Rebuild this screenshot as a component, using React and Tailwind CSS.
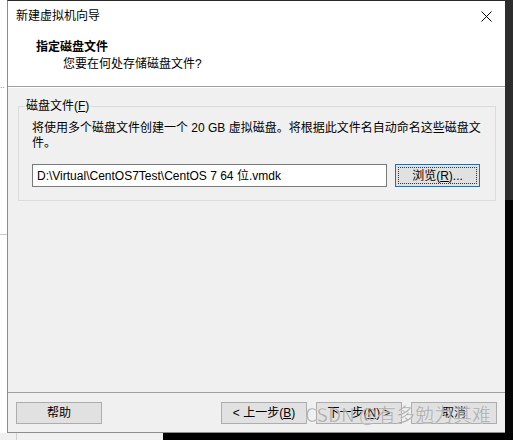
import React from 'react';

const font = { fontFamily: '"Liberation Sans", "Noto Sans CJK SC", sans-serif' };

const Btn = ({ children, className = '' }) => (
  <button
    className={`h-[22px] w-[86px] border border-[#adadad] bg-[#e1e1e1] text-[12px] text-black leading-none flex items-center justify-center ${className}`}
  >
    {children}
  </button>
);

const App = () => {
  return (
    <div className="w-[513px] h-[440px] flex flex-col overflow-hidden relative bg-white" style={font}>
      <div className="flex h-[433px]">
        {/* desktop strip on the left */}
        <div className="w-[7px] flex flex-col bg-white">
          <div className="h-[86px]" />
          <div className="text-[8px] leading-none text-[#3060a0] -mt-1">..</div>
          <div className="h-[144px]" />
          <div className="h-px bg-[#c8c8c8]" />
        </div>

        {/* dialog */}
        <div className="w-[498px] flex flex-col border-l border-b border-[#8c8c8c] border-t border-t-[#2a2a2a]">
          <div className="h-[30px] bg-white flex items-center justify-between pl-[8px] pr-[13px]">
            <span className="text-[12px] text-black">新建虚拟机向导</span>
            <svg width="11" height="11" viewBox="0 0 11 11">
              <path d="M0.5 0.5 L10.5 10.5 M10.5 0.5 L0.5 10.5" stroke="#000" strokeWidth="1" />
            </svg>
          </div>
          <div className="h-[56px] bg-white border-b border-[#a0a0a0] flex flex-col pl-[28px] pt-[8px]">
            <span className="text-[12px] font-bold text-black leading-[17px]">指定磁盘文件</span>
            <span className="text-[12px] text-black leading-[17px] pl-[27px]">您要在何处存储磁盘文件?</span>
          </div>
          <div className="flex-1 bg-[#f0f0f0] border-t border-white flex flex-col">
            <div className="flex-1 pt-[18px] pl-[10px] pr-[9px]">
              <div className="relative border border-[#dcdcdc] h-[95px] pl-[13px] pr-[10px] pt-[14px]">
                <span className="absolute -top-[9px] left-[6px] bg-[#f0f0f0] px-[1px] text-[12px] leading-[17px] text-black">
                  磁盘文件(<span className="underline">F</span>)
                </span>
                <p className="text-[12px] leading-[15px] text-black">
                  将使用多个磁盘文件创建一个 20 GB 虚拟磁盘。将根据此文件名自动命名这些磁盘文件。
                </p>
                <div className="flex items-center gap-[8px] mt-[13px]">
                  <div className="w-[355px] h-[23px] border border-[#7a7a7a] bg-white flex items-center pl-[4px] text-[12px] text-black">
                    D:\Virtual\CentOS7Test\CentOS 7 64 位.vmdk
                  </div>
                  <div className="w-[85px] h-[23px] border border-[#0078d7] bg-[#e1e1e1] p-[2px]">
                    <div className="w-full h-full border border-dotted border-[#333] flex items-center justify-center text-[12px] text-black">
                      浏览(<span className="underline">R</span>)...
                    </div>
                  </div>
                </div>
              </div>
            </div>
            <div className="h-[40px] border-t border-[#a0a0a0] flex items-start pt-[9px] pl-[8px] pr-[8px]">
              <Btn>帮助</Btn>
              <div className="flex-1" />
              <div className="flex gap-[9px]">
                <Btn>&lt; 上一步(<span className="underline">B</span>)</Btn>
                <Btn>下一步(<span className="underline">N</span>) &gt;</Btn>
                <Btn>取消</Btn>
              </div>
            </div>
          </div>
        </div>

        {/* dark strip on the right */}
        <div className="flex-1 flex flex-col">
          <div className="h-[200px] bg-[#2d2d2d]" />
          <div className="flex-1 bg-[#050505]" />
        </div>
      </div>
      <div className="flex-1 flex">
        <div className="w-[163px] bg-[#f0f0f0] flex">
          <div className="w-[16px]" />
          <div className="w-px bg-[#d0d0d0]" />
        </div>
        <div className="flex-1 bg-black" />
      </div>

      {/* watermark */}
      <div
        className="absolute left-[305px] top-[401px] text-[19px] leading-[26px] text-[#999999]/80 pointer-events-none"
        style={{ fontFamily: '"Noto Sans CJK SC", sans-serif', WebkitTextStroke: '0.4px rgba(255,255,255,0.6)' }}
      >
        CSDN @有多勉为其难
      </div>
    </div>
  );
};

export default App;
